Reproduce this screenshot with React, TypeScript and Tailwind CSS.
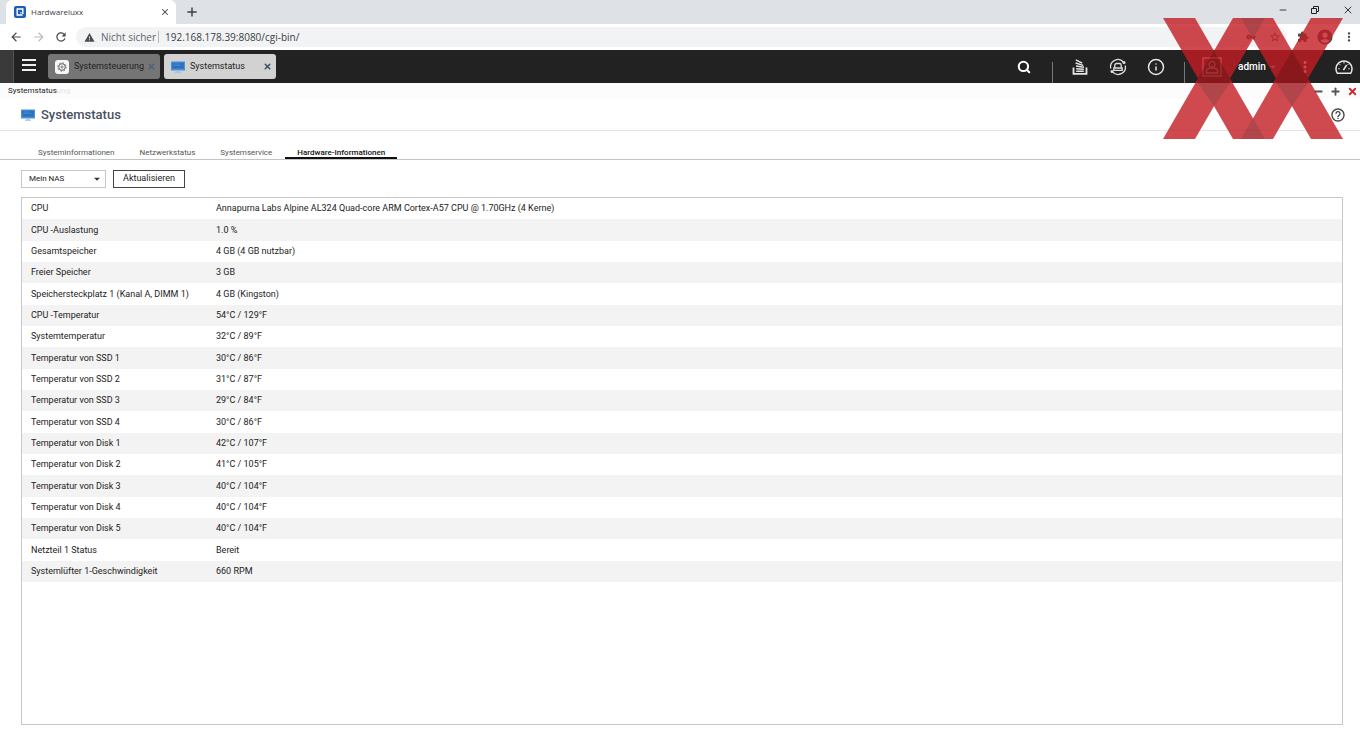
import { useState } from 'react';
import type { ReactNode } from 'react';
import { Info, Minus, Plus, Search, X } from 'lucide-react';
import {
  MdAccountCircle,
  MdArrowBack,
  MdArrowDropDown,
  MdArrowForward,
  MdExtension,
  MdHelpOutline,
  MdMoreVert,
  MdRefresh,
  MdStarBorder,
  MdVpnKey,
  MdWarning,
} from 'react-icons/md';

interface HardwareRow {
  label: string;
  value: string;
}

const hardwareRows: HardwareRow[] = [
  { label: 'CPU', value: 'Annapurna Labs Alpine AL324 Quad-core ARM Cortex-A57 CPU @ 1.70GHz (4 Kerne)' },
  { label: 'CPU -Auslastung', value: '1.0 %' },
  { label: 'Gesamtspeicher', value: '4 GB (4 GB nutzbar)' },
  { label: 'Freier Speicher', value: '3 GB' },
  { label: 'Speichersteckplatz 1 (Kanal A, DIMM 1)', value: '4 GB (Kingston)' },
  { label: 'CPU -Temperatur', value: '54°C / 129°F' },
  { label: 'Systemtemperatur', value: '32°C / 89°F' },
  { label: 'Temperatur von SSD 1', value: '30°C / 86°F' },
  { label: 'Temperatur von SSD 2', value: '31°C / 87°F' },
  { label: 'Temperatur von SSD 3', value: '29°C / 84°F' },
  { label: 'Temperatur von SSD 4', value: '30°C / 86°F' },
  { label: 'Temperatur von Disk 1', value: '42°C / 107°F' },
  { label: 'Temperatur von Disk 2', value: '41°C / 105°F' },
  { label: 'Temperatur von Disk 3', value: '40°C / 104°F' },
  { label: 'Temperatur von Disk 4', value: '40°C / 104°F' },
  { label: 'Temperatur von Disk 5', value: '40°C / 104°F' },
  { label: 'Netzteil 1 Status', value: 'Bereit' },
  { label: 'Systemlüfter 1-Geschwindigkeit', value: '660 RPM' },
];

const tabs = ['Systeminformationen', 'Netzwerkstatus', 'Systemservice', 'Hardware-Informationen'];

const MonitorIcon = () => (
  <svg viewBox="0 0 14 12" className="h-3 w-3.5 shrink-0">
    <rect x="0" y="0.5" width="14" height="9" rx="0.6" fill="#4a90d9" />
    <rect x="1.2" y="1.6" width="11.6" height="6" fill="#2c70bd" />
    <path d="M2.5 3h6M2.5 4.5h8" stroke="#5b9bdc" strokeWidth="0.5" />
    <path d="M5.5 9.5h3l.5 1.3H5z" fill="#9fc4e8" />
    <path d="M4 11.3h6" stroke="#8fb4d8" strokeWidth="0.8" />
  </svg>
);

const GearIcon = () => (
  <svg viewBox="0 0 14 14" className="size-3.5 shrink-0">
    <rect width="14" height="14" rx="3" fill="#f7f7f7" />
    <circle cx="7" cy="7" r="3.3" fill="none" stroke="#5d6066" strokeWidth="1" />
    <circle cx="7" cy="7" r="4.2" fill="none" stroke="#5d6066" strokeWidth="1" strokeDasharray="1.4 1.9" />
    <circle cx="7" cy="7" r="1.1" fill="none" stroke="#5d6066" strokeWidth="0.8" />
  </svg>
);

const TasksIcon = () => (
  <svg viewBox="0 0 16 18" className="h-[18px] w-4" fill="none" stroke="#e6e6e6">
    <path d="M1.5 9.5v6.3h13V9.5" strokeWidth="1.8" />
    <path d="M4.2 13.2h7.6M4.2 10.7l7.6.6M4 8l8 1.3M3.6 5l7.6 2.4M3.8 1.8l6.4 3.4" strokeWidth="1.4" />
  </svg>
);

const SyncIcon = () => (
  <svg viewBox="0 0 18 18" className="size-[18px]" fill="none" stroke="#dedede" strokeWidth="1.3">
    <path d="M1.8 10.5A7.3 7.3 0 0 1 14.6 4.3M16.2 7.5A7.3 7.3 0 0 1 3.4 13.7" />
    <circle cx="15" cy="4.4" r="1.5" fill="#dedede" stroke="none" />
    <circle cx="3" cy="13.6" r="1.5" fill="#dedede" stroke="none" />
    <path d="M5.8 10V7.2c0-1.2.8-1.7 1.7-1.7h3c.9 0 1.7.5 1.7 1.7V10M4.8 10h8.4v2.3H4.8z" />
  </svg>
);

const UserIcon = () => (
  <svg viewBox="0 0 20 20" className="size-5" fill="none" stroke="#e8e8e8" strokeWidth="1.3">
    <rect x="1" y="1" width="18" height="18" />
    <circle cx="10" cy="7.3" r="2.9" />
    <path d="M4.5 16v-2.2c0-1.7 1.5-2.5 4-2.8h3c2.5.3 4 1.1 4 2.8V16z" />
  </svg>
);

const GaugeIcon = () => (
  <svg viewBox="0 0 18 16" className="h-4 w-[18px]" fill="none" stroke="#e6e6e6" strokeWidth="1.5">
    <path d="M2.3 14.3A8 8 0 1 1 15.7 14.3z" strokeLinejoin="round" />
    <path d="M8.4 11.2 11.6 6" strokeWidth="1.6" />
    <path d="M9 2.8v1.7M4.6 5.2l1 1M3.3 9.8h1.5M13.2 9.8h1.5M13.5 5l-.8.9" strokeWidth="1" />
  </svg>
);

const Favicon = () => (
  <svg viewBox="0 0 12 12" className="size-3 shrink-0">
    <rect width="12" height="12" rx="2" fill="#1d5fb0" />
    <path d="M8.6 9H3.2V3h5.6v5" fill="none" stroke="#fff" strokeWidth="1.4" />
    <path d="M6 6h1.6v1.6H6z" fill="#9cc6f5" />
  </svg>
);

// Site logo laid over the top right corner
const Watermark = () => (
  <svg viewBox="0 0 180 121" className="pointer-events-none absolute top-[18px] right-[17px] h-[121px] w-[180px]">
    <g opacity="0.8" fill="#c41d23">
      <path d="M0 0h32l70 121H70z" />
      <path d="M70 0h32L32 121H0z" />
      <path d="M78 0h32l70 121h-32z" />
      <path d="M148 0h32l-70 121H78z" />
    </g>
    {/* darker where the strokes cross, more so on the black bar */}
    <g fill="#6a4044" opacity="0.3">
      <path d="M35 65h32L51 88z" />
      <path d="M113 65h32l-16 23z" />
      <path d="M78 0h24L90 21z" />
      <path d="M78 121h24L90 100z" />
    </g>
    <g fill="#5a1014" opacity="0.35">
      <path d="M51 33 67 60v5H35v-5z" />
      <path d="M129 33l16 27v5h-32v-5z" />
    </g>
  </svg>
);

const BarButton = ({ label, children }: { label: string; children: ReactNode }) => (
  <button aria-label={label} className="flex h-full w-[38px] items-center justify-center">
    {children}
  </button>
);

const BrowserChrome = () => {
  const [address, setAddress] = useState('192.168.178.39:8080/cgi-bin/');

  return (
    <div className="font-['Open_Sans',sans-serif]">
      {/* Tab strip */}
      <div className="flex h-6 items-start bg-[#dee1e6] text-[#3c4043]">
        <div className="ml-1.5 flex h-6 w-[170px] items-center rounded-t-md bg-white pr-1.5 pl-2">
          <Favicon />
          <span className="ml-[5px] flex-1 text-[8px]">Hardwareluxx</span>
          <button aria-label="Tab schließen">
            <X className="size-2.5" strokeWidth={2.5} />
          </button>
        </div>
        <button aria-label="Neuer Tab" className="ml-2 flex h-6 w-4 items-center justify-center">
          <Plus className="size-3.5" strokeWidth={2.5} />
        </button>
        <div className="ml-auto flex h-5 items-center text-[#202124]">
          <button aria-label="Minimieren" className="flex w-8 justify-center">
            <Minus className="size-2.5" strokeWidth={2} />
          </button>
          <button aria-label="Verkleinern" className="flex w-8 justify-center">
            <svg viewBox="0 0 10 10" className="size-2.5" fill="none" stroke="currentColor" strokeWidth="1">
              <path d="M1.5 3.5h5v5h-5zM3.5 3V1.5h5v5H7" />
            </svg>
          </button>
          <button aria-label="Fenster schließen" className="flex w-[29px] justify-end pr-1.5">
            <X className="size-3" strokeWidth={1.8} />
          </button>
        </div>
      </div>

      {/* Address bar */}
      <div className="flex h-[26px] items-center bg-white text-[#4a4d51]">
        <button aria-label="Zurück" className="flex w-8 justify-center">
          <MdArrowBack className="size-3.5" />
        </button>
        <button aria-label="Vorwärts" className="flex w-3.5 justify-center text-[#b9bcbf]">
          <MdArrowForward className="size-3.5" />
        </button>
        <button aria-label="Neu laden" className="flex w-[30px] justify-center">
          <MdRefresh className="size-3.5" />
        </button>
        <div className="flex h-5 flex-1 items-center rounded-full bg-[#f1f3f4] pl-2">
          <MdWarning className="size-[11px] shrink-0" />
          <span className="ml-1.5 text-[10px] whitespace-nowrap text-[#5f6368]">Nicht sicher</span>
          <span className="mr-1.5 ml-0.5 h-3 w-px bg-[#b5b8bc]" />
          <input
            aria-label="Adresse"
            value={address}
            onChange={(e) => setAddress(e.target.value)}
            className="min-w-0 flex-1 bg-transparent text-[10px] text-[#3c4043] outline-none"
          />
          <button aria-label="Passwörter" className="flex w-6 justify-center">
            <MdVpnKey className="size-2.5" />
          </button>
          <button aria-label="Lesezeichen" className="flex w-6 justify-center">
            <MdStarBorder className="size-3" />
          </button>
        </div>
        <button aria-label="Erweiterungen" className="ml-1.5 flex w-5 justify-center">
          <MdExtension className="size-3" />
        </button>
        <button aria-label="Profil" className="flex w-6 justify-center">
          <MdAccountCircle className="size-[18px]" />
        </button>
        <button aria-label="Menü" className="flex w-[23px] justify-center">
          <MdMoreVert className="size-3.5" />
        </button>
      </div>
    </div>
  );
};

const TaskBar = () => (
  <div className="flex h-[33px] items-center bg-[#222222] text-white">
    <div className="h-full w-3.5 border-r border-[#555555] bg-[#3a3a3a]" />
    <button aria-label="Hauptmenü" className="mb-1 ml-2 flex flex-col gap-[3px]">
      <span className="h-0.5 w-3.5 bg-[#f0f0f0]" />
      <span className="h-0.5 w-3.5 bg-[#f0f0f0]" />
      <span className="h-0.5 w-3.5 bg-[#f0f0f0]" />
    </button>
    <div className="ml-3 flex gap-1 text-[9px] text-[#222222]">
      <div className="flex h-[25px] w-28 items-center rounded-[3px] bg-[#757575] pr-1 pl-[7px]">
        <GearIcon />
        <span className="ml-[5px] flex-1">Systemsteuerung</span>
        <button aria-label="Systemsteuerung schließen">
          <X className="size-[9px] text-[#4d6079]" strokeWidth={4} />
        </button>
      </div>
      <div className="flex h-[25px] w-28 items-center rounded-[3px] bg-[#d2d2d2] pr-1 pl-[7px]">
        <MonitorIcon />
        <span className="ml-[5px] flex-1">Systemstatus</span>
        <button aria-label="Systemstatus schließen">
          <X className="size-[9px] text-[#3d5069]" strokeWidth={4} />
        </button>
      </div>
    </div>

    <div className="ml-auto flex h-full items-center">
      <BarButton label="Suche">
        <Search className="size-3.5" strokeWidth={3.5} />
      </BarButton>
      <span className="mr-2 ml-[9px] h-[21px] w-px self-end bg-[#777777]" />
      <BarButton label="Hintergrundaufgaben">
        <TasksIcon />
      </BarButton>
      <BarButton label="Externe Geräte">
        <SyncIcon />
      </BarButton>
      <BarButton label="Ereignisse">
        <Info className="size-[18px] text-[#e6e6e6]" strokeWidth={2} />
      </BarButton>
      <span className="mr-2 ml-[9px] h-[21px] w-px self-end bg-[#777777]" />
      <BarButton label="Benutzer">
        <UserIcon />
      </BarButton>
      <button className="flex h-full w-[51px] items-center pl-[7px] text-[10px] font-medium">
        admin
        <MdArrowDropDown className="size-3.5 text-[#aaaaaa]" />
      </button>
      <button aria-label="Mehr" className="flex w-[46px] justify-center">
        <MdMoreVert className="size-[18px]" />
      </button>
      <button aria-label="Dashboard" className="flex w-8 justify-center">
        <GaugeIcon />
      </button>
    </div>
  </div>
);

export default function App() {
  const [activeTab, setActiveTab] = useState('Hardware-Informationen');

  return (
    <div className="relative flex min-h-screen flex-col bg-white font-['Roboto',sans-serif] text-[#222222]">
      <BrowserChrome />
      <TaskBar />

      {/* Window title bar */}
      <div className="flex h-4 items-center bg-[#fcfcfc] pr-0.5 pl-2 text-[8px]">
        <span>Systemstatus</span>
        <span className="text-[#e4e4e4]">ung</span>
        <div className="ml-auto flex gap-1.5 text-[#555555]">
          <button aria-label="Fenster minimieren">
            <Minus className="size-[11px]" strokeWidth={4} />
          </button>
          <button aria-label="Fenster maximieren">
            <Plus className="size-[11px]" strokeWidth={4} />
          </button>
          <button aria-label="App schließen">
            <X className="size-[11px] text-[#d8232a]" strokeWidth={4} />
          </button>
        </div>
      </div>

      {/* Header */}
      <header className="flex h-8 items-center border-b border-[#e4e4e4] pr-3.5 pl-[21px]">
        <MonitorIcon />
        <h1 className="ml-1.5 text-[13px] font-medium text-[#4a5062]">Systemstatus</h1>
        <button aria-label="Hilfe" className="ml-auto">
          <MdHelpOutline className="size-4 text-[#444444]" />
        </button>
      </header>

      {/* Tabs */}
      <nav className="flex h-[29px] items-end gap-px border-b border-[#c4c4c4] pl-[26px] text-[8px]">
        {tabs.map((tab) => (
          <button
            key={tab}
            onClick={() => setActiveTab(tab)}
            className={
              tab === activeTab
                ? 'h-3 border-b-2 border-[#111111] px-3 leading-3 font-medium text-[#111111]'
                : 'h-3 border-b-2 border-transparent px-3 leading-3 text-[#555555]'
            }
          >
            {tab}
          </button>
        ))}
      </nav>

      <main className="flex flex-1 flex-col px-[17px] pt-2.5 pb-3.5 pl-[21px]">
        <div className="mb-[9px] flex h-[18px] gap-[7px]">
          <div className="relative w-[85px]">
            <select
              aria-label="NAS auswählen"
              className="block h-[18px] w-full appearance-none border border-[#c8c8c8] bg-white pl-[7px] text-[8px] outline-none"
            >
              <option>Mein NAS</option>
            </select>
            <MdArrowDropDown className="pointer-events-none absolute top-0.5 right-0.5 size-3.5 text-[#333333]" />
          </div>
          <button className="w-[72px] border border-[#444444] bg-white text-[9px]">Aktualisieren</button>
        </div>

        <div className="flex-1 border border-[#c8c8c8]">
          <table className="h-[384px] w-full border-collapse text-left text-[9px]">
            <tbody>
              {hardwareRows.map((row) => (
                <tr key={row.label} className="even:bg-[#f3f3f3]">
                  <th scope="row" className="w-[185px] pt-px pb-0 pl-[9px] font-normal whitespace-nowrap">
                    {row.label}
                  </th>
                  <td className="pt-px pb-0 pl-[9px]">{row.value}</td>
                </tr>
              ))}
            </tbody>
          </table>
        </div>
      </main>

      <Watermark />
    </div>
  );
}
